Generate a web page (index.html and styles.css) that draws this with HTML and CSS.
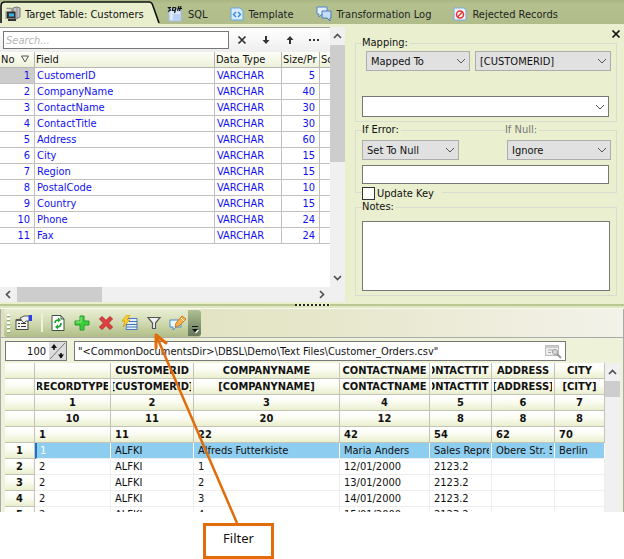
FILE: index.html
```html
<!DOCTYPE html>
<html lang="en">
<head>
<meta charset="utf-8">
<title>Target Table: Customers</title>
<link rel="stylesheet" href="styles.css">
</head>
<body>
<div class="app">
  <nav class="tabs">
    <a class="tab tab-active" href="#target">
      <svg class="tab-shape" viewBox="0 0 160 24" width="160" height="24"><path d="M0 24V6Q1 2 5 2H149Q152 2 153 6L159 24Z" fill="#e9efcd"/><path d="M1 23V6Q1 2 5 2H149Q152 2 153 6L159 23" fill="none" stroke="#111" stroke-width="1.6"/></svg>
      <span class="tab-body">
        <svg width="16" height="16" viewBox="0 0 16 16"><path d="M1.500 2.500h5v2h3" fill="none" stroke="#999" stroke-width="1.500"/><path d="M8 2l4-1 3 1v9l-4 2-3-2z" fill="#c4c4c4" stroke="#777"/><path d="M12 2v10" stroke="#888"/><rect x="2" y="6" width="8" height="6" fill="#3a3a3a" stroke="#222"/><path d="M4 7.500h5v3H4z" fill="#35b4ea"/><path d="M3 14h8" stroke="#333" stroke-width="2"/><path d="M1 5v8" stroke="#999"/></svg>
        Target Table: Customers
      </span>
    </a>
    <a class="tab" href="#sql">
      <svg width="16" height="16" viewBox="0 0 16 16"><path d="M2 3h12v12H2z" fill="#dce8fb" stroke="#9fb8e6"/><path d="M6 8h7v6H6z" fill="#bcd1f6"/><path d="M4 1.500H1.500L3.500 4L1 5.500M8.500 1.500H6L5.500 4.500H8L9 1.500L7.500 7M10.500 5L12 0M11.500 2.500H15M14 0L12.500 5" fill="none" stroke="#111" stroke-width="1.200"/></svg>
      SQL
    </a>
    <a class="tab" href="#template">
      <svg width="14" height="14" viewBox="0 0 14 14"><path d="M1 1h9l3 3v9H1z" fill="#d6ebfc" stroke="#65a8e3"/><path d="M6 5L3.500 7.500L6 10M8 5l2.500 2.500L8 10" fill="none" stroke="#328ada" stroke-width="1.400"/></svg>
      Template
    </a>
    <a class="tab" href="#log">
      <svg width="16" height="16" viewBox="0 0 16 16"><path d="M1 1h10v7H6l-3 3V8H1z" fill="#e4effc" stroke="#5585c8"/><path d="M6 5h9v7h-1v3l-3-3H6z" fill="#c3dcf8" stroke="#4778c0"/></svg>
      Transformation Log
    </a>
    <a class="tab" href="#rejected">
      <svg width="14" height="14" viewBox="0 0 14 14"><path d="M1 1h10l2 2v10H1z" fill="#e9f2fc" stroke="#7fa9db"/><circle cx="7" cy="7.500" r="3.500" fill="#fff" stroke="#e3342c" stroke-width="1.500"/><path d="M4.500 10l5-5" stroke="#e3342c" stroke-width="1.500"/></svg>
      Rejected Records
    </a>
  </nav>

  <main class="upper">
    <section class="fields">
      <div class="fields-view">
        <div class="search">
          <input class="search-box" type="text" placeholder="Search..." aria-label="Search">
          <button class="tool" aria-label="Clear"><svg width="10" height="10" viewBox="0 0 10 10"><path d="M1.500 1.500l7 7M8.500 1.500l-7 7" stroke="#333" stroke-width="1.700"/></svg></button>
          <button class="tool" aria-label="Next"><svg width="10" height="10" viewBox="0 0 10 10"><path d="M5 1v6" stroke="#333" stroke-width="2"/><path d="M1.500 5h7L5 9z" fill="#333"/></svg></button>
          <button class="tool" aria-label="Previous"><svg width="10" height="10" viewBox="0 0 10 10"><path d="M5 9V3" stroke="#333" stroke-width="2"/><path d="M1.500 5h7L5 1z" fill="#333"/></svg></button>
          <button class="tool" aria-label="More"><svg width="10" height="10" viewBox="0 0 10 10"><path d="M0 4h2v2H0zM4 4h2v2H4zM8 4h2v2H8z" fill="#333"/></svg></button>
        </div>
        <table class="field-table">
          <colgroup><col class="f-no"><col><col class="f-type"><col class="f-size"><col class="f-scale"></colgroup>
          <thead><tr><th>No <svg class="sort" width="8" height="8" viewBox="0 0 8 8"><path d="M.5 1h7L4 7z" fill="none" stroke="#555"/></svg></th><th>Field</th><th>Data Type</th><th>Size/Pr</th><th>Sc</th></tr></thead>
          <tbody>
            <tr class="current"><td>1</td><td>CustomerID</td><td>VARCHAR</td><td>5</td><td></td></tr>
            <tr><td>2</td><td>CompanyName</td><td>VARCHAR</td><td>40</td><td></td></tr>
            <tr><td>3</td><td>ContactName</td><td>VARCHAR</td><td>30</td><td></td></tr>
            <tr><td>4</td><td>ContactTitle</td><td>VARCHAR</td><td>30</td><td></td></tr>
            <tr><td>5</td><td>Address</td><td>VARCHAR</td><td>60</td><td></td></tr>
            <tr><td>6</td><td>City</td><td>VARCHAR</td><td>15</td><td></td></tr>
            <tr><td>7</td><td>Region</td><td>VARCHAR</td><td>15</td><td></td></tr>
            <tr><td>8</td><td>PostalCode</td><td>VARCHAR</td><td>10</td><td></td></tr>
            <tr><td>9</td><td>Country</td><td>VARCHAR</td><td>15</td><td></td></tr>
            <tr><td>10</td><td>Phone</td><td>VARCHAR</td><td>24</td><td></td></tr>
            <tr><td>11</td><td>Fax</td><td>VARCHAR</td><td>24</td><td></td></tr>
          </tbody>
        </table>
      </div>
      <div class="vbar">
        <svg width="15" height="18" viewBox="0 0 15 18"><path d="M4 11l3.500-3.500L11 11" fill="none" stroke="#505050" stroke-width="1.700"/></svg>
        <span class="vthumb"></span>
        <svg class="bar-end" width="15" height="18" viewBox="0 0 15 18"><path d="M4 7l3.500 3.500L11 7" fill="none" stroke="#505050" stroke-width="1.700"/></svg>
      </div>
      <div class="hbar">
        <svg width="17" height="15" viewBox="0 0 17 15"><path d="M10 4L6.500 7.500L10 11" fill="none" stroke="#505050" stroke-width="1.700"/></svg>
        <span class="hthumb"></span>
        <svg class="bar-end" width="17" height="15" viewBox="0 0 17 15"><path d="M7 4l3.500 3.500L7 11" fill="none" stroke="#505050" stroke-width="1.700"/></svg>
      </div>
    </section>

    <section class="props">
      <div class="props-close"><button class="tool" aria-label="Close"><svg width="10" height="10" viewBox="0 0 10 10"><path d="M1.500 1.500l7 7M8.500 1.500l-7 7" stroke="#111" stroke-width="1.700"/></svg></button></div>
      <div class="group">
        <div class="group-title"><label for="mapping">Mapping:</label></div>
        <div class="pair pair-map">
          <div class="pick"><select id="mapping"><option>Mapped To</option></select><svg class="chev" width="10" height="6" viewBox="0 0 10 6"><path d="M1 1l4 4l4-4" fill="none" stroke="#555"/></svg></div>
          <div class="pick"><select aria-label="Source column"><option>[CUSTOMERID]</option></select><svg class="chev" width="10" height="6" viewBox="0 0 10 6"><path d="M1 1l4 4l4-4" fill="none" stroke="#555"/></svg></div>
        </div>
        <div class="pick pick-white"><select aria-label="Expression"><option></option></select><svg class="chev" width="10" height="6" viewBox="0 0 10 6"><path d="M1 1l4 4l4-4" fill="none" stroke="#555"/></svg></div>
      </div>
      <div class="group group-error">
        <div class="group-title"><label for="iferror">If Error:</label><label class="muted" for="ifnull">If Null:</label></div>
        <div class="pair pair-error">
          <div class="pick"><select id="iferror"><option>Set To Null</option></select><svg class="chev" width="10" height="6" viewBox="0 0 10 6"><path d="M1 1l4 4l4-4" fill="none" stroke="#555"/></svg></div>
          <div class="pick"><select id="ifnull"><option>Ignore</option></select><svg class="chev" width="10" height="6" viewBox="0 0 10 6"><path d="M1 1l4 4l4-4" fill="none" stroke="#555"/></svg></div>
        </div>
        <input class="line" type="text" aria-label="Error value">
        <label class="check"><input type="checkbox">Update Key</label>
      </div>
      <div class="group group-notes">
        <div class="group-title"><label for="notes">Notes:</label></div>
        <textarea id="notes"></textarea>
      </div>
    </section>
  </main>

  <div class="splitter"><span class="grip"></span></div>

  <section class="source">
    <div class="toolbar-row">
      <div class="toolbar">
        <span class="handle"></span>
        <button class="tool tool-first" aria-label="Properties"><svg width="18" height="16" viewBox="0 0 18 16"><path d="M1 4.500h12v10H1z" fill="#f5f5ee" stroke="#444"/><path d="M1 4h12v2H1z" fill="#555"/><path d="M3 8.500h2M3 11.500h2M6 8.500h5M6 11.500h5" stroke="#333"/><path d="M5 3l4-2h5v5h-3L9 8 7 6z" fill="#eee" stroke="#555"/><path d="M14 0h3v6h-3z" fill="#2a3df0"/></svg></button>
        <span class="divider"></span>
        <button class="tool" aria-label="Refresh"><svg width="16" height="16" viewBox="0 0 16 16"><path d="M2 .5h9L14 4v11.500H2z" fill="#fff" stroke="#3f5449"/><path d="M11 1v3h3" fill="none" stroke="#3f5449"/><path d="M5 8q0-3 4-3M11 8q0 4-4 4" fill="none" stroke="#1fa32c" stroke-width="1.700"/><path d="M8 2.500l3 2.500-3 2.500zM8 9.500L5 12l3 2.500z" fill="#1fa32c"/></svg></button>
        <button class="tool" aria-label="Add"><svg width="16" height="16" viewBox="0 0 16 16"><path d="M6 1h4v5h5v4h-5v5H6v-5H1V6h5z" fill="#3ed03c" stroke="#249a2a"/><path d="M7 2v5H2" fill="none" stroke="#8df084"/></svg></button>
        <button class="tool" aria-label="Delete"><svg width="16" height="16" viewBox="0 0 16 16"><path d="M4 1.500l4 4 4-4L14.500 4l-4 4 4 4-2.500 2.500-4-4-4 4L1.500 12l4-4-4-4z" fill="#dc3f40" stroke="#b82b2e"/></svg></button>
        <button class="tool" aria-label="Execute"><svg width="18" height="16" viewBox="0 0 18 16"><path d="M6 3.500h10v11H5z" fill="#e5f0fc" stroke="#4779ae"/><path d="M8 6.500h8M6 9.500h10M6 12h10" stroke="#4779ae"/><path d="M6 0L1 6h3l-2 6 7-7H6l3-5z" fill="#ffd22e" stroke="#d89812" stroke-width=".8"/></svg></button>
        <button class="tool" aria-label="Filter" id="filter"><svg width="16" height="16" viewBox="0 0 16 16"><path d="M2 2.500h12L9.500 8v5.500h-3V8z" fill="#f2f2f2" stroke="#555" stroke-width="1.200"/></svg></button>
        <button class="tool" aria-label="Edit"><svg width="18" height="16" viewBox="0 0 18 16"><path d="M1 5h11v7H7l-3 3v-3H1z" fill="#eef6ff" stroke="#488bd0"/><path d="M13 1l4 3-7 7-4 1 1-4z" fill="#f6b04c" stroke="#cf7c1d"/><path d="M12 3l3 3" stroke="#fff"/></svg></button>
        <button class="overflow" aria-label="Toolbar options"><svg width="12" height="24" viewBox="0 0 12 24"><path d="M3 14.500h6" stroke="#111"/><path d="M4 18h6l-3 3.500z" fill="#fff"/><path d="M3 17h6l-3 3.500z" fill="#111"/></svg></button>
      </div>
    </div>
    <div class="path-row">
      <div class="spin"><input type="text" value="100" aria-label="Rows"><button aria-label="Change row count"><svg width="17" height="18" viewBox="0 0 17 18"><path d="M1 17L16 1" stroke="#777"/><path d="M5 3v5M12 11v5" stroke="#111" stroke-width="1.600"/><path d="M2 6l3-4 3 4zM9 12.500l3 4 3-4z" fill="#111"/></svg></button></div>
      <div class="path"><input type="text" value="&quot;&lt;CommonDocumentsDir&gt;\DBSL\Demo\Text Files\Customer_Orders.csv&quot;" aria-label="Source file"><svg width="18" height="15" viewBox="0 0 18 15"><path d="M1.500 1.500h13v10h-13z" fill="#eee" stroke="#bbb"/><path d="M2 3h12M4 6h5M4 8.500h3" stroke="#aaa"/><circle cx="11" cy="8" r="2.500" fill="#ddd" stroke="#999"/><path d="M13 10l4 4" stroke="#999" stroke-width="2"/></svg></div>
    </div>
    <div class="grid-row">
      <div class="grid-view">
        <table class="data">
          <colgroup><col class="d-head"><col class="d-rec"><col class="d-cust"><col><col class="d-contact"><col class="d-title"><col class="d-addr"><col class="d-city"></colgroup>
          <thead>
            <tr><th></th><th></th><th><span>CUSTOMERID</span></th><th><span>COMPANYNAME</span></th><th><span>CONTACTNAME</span></th><th><span>CONTACTTITLE</span></th><th><span>ADDRESS</span></th><th><span>CITY</span></th></tr>
            <tr><th></th><th><span>RECORDTYPE</span></th><th><span>[CUSTOMERID]</span></th><th><span>[COMPANYNAME]</span></th><th><span>[CONTACTNAME]</span></th><th><span>[CONTACTTITLE]</span></th><th><span>[ADDRESS]</span></th><th><span>[CITY]</span></th></tr>
            <tr><th></th><th>1</th><th>2</th><th>3</th><th>4</th><th>5</th><th>6</th><th>7</th></tr>
            <tr><th></th><th>10</th><th>11</th><th>20</th><th>12</th><th>8</th><th>8</th><th>8</th></tr>
            <tr class="start"><th></th><th>1</th><th>11</th><th>22</th><th>42</th><th>54</th><th>62</th><th>70</th></tr>
          </thead>
          <tbody>
            <tr class="selected"><th>1</th><td>1</td><td>ALFKI</td><td>Alfreds Futterkiste</td><td>Maria Anders</td><td><div>Sales Representative</div></td><td><div>Obere Str. 57</div></td><td>Berlin</td></tr>
            <tr><th>2</th><td>2</td><td>ALFKI</td><td>1</td><td>12/01/2000</td><td>2123.2</td><td></td><td></td></tr>
            <tr><th>3</th><td>2</td><td>ALFKI</td><td>2</td><td>13/01/2000</td><td>2123.2</td><td></td><td></td></tr>
            <tr><th>4</th><td>2</td><td>ALFKI</td><td>3</td><td>14/01/2000</td><td>2123.2</td><td></td><td></td></tr>
            <tr><th>5</th><td>2</td><td>ALFKI</td><td>4</td><td>15/01/2000</td><td>2123.2</td><td></td><td></td></tr>
          </tbody>
        </table>
      </div>
      <div class="vbar vbar-data">
        <svg width="15" height="18" viewBox="0 0 15 18"><path d="M4 11l3.500-3.500L11 11" fill="none" stroke="#505050" stroke-width="1.700"/></svg>
        <span class="vthumb"></span>
      </div>
    </div>
  </section>

  <svg class="pointer" width="90" height="194" viewBox="0 0 90 194"><path d="M5 3L86 191" stroke="#e36c0a" stroke-width="2.500"/><path d="M5 3L5 16M5 3L15 11" stroke="#e36c0a" stroke-width="3" stroke-linecap="round" fill="none"/></svg>
  <div class="callout">Filter</div>
</div>
</body>
</html>
```
FILE: styles.css
```css
* { box-sizing: border-box; }

body {
  margin: 0;
  background: #fff;
  color: #111;
  font: 11px/15px "DejaVu Sans Condensed", "Noto Sans", sans-serif;
}

button, input, select, textarea { font: inherit; color: inherit; margin: 0; border-radius: 0; }
button { border: 0; padding: 0; background: none; }
svg { display: block; flex: none; }

/* Bottom padding leaves room for the callout under the window */
.app { position: relative; padding-bottom: 47px; }

/* Tabs */
.tabs {
  display: flex;
  align-items: center;
  gap: 22px;
  height: 24px;
  background: linear-gradient(#a8b584, #b4c18e 4px, #b0bd8b);
}
.tab {
  display: flex;
  align-items: center;
  gap: 5px;
  padding-top: 4px;
  color: #222;
  text-decoration: none;
  white-space: nowrap;
}
.tab-active {
  display: grid;
  width: 160px;
  margin-right: -15px;
  padding: 0;
  color: #111;
}
.tab-active > * { grid-area: 1 / 1; }
.tab-body { display: flex; align-items: center; gap: 4px; padding: 4px 0 0 5px; }

/* Upper half */
.upper {
  display: grid;
  grid-template-columns: 347px 1fr;
  background: #e9efcf;
}
.fields {
  display: grid;
  grid-template-columns: 1fr 15px;
  grid-template-rows: 1fr 15px;
  margin-right: 2px;
  border-top: 3px solid #e9efcf;
  background: #f0f0f0;
}
.fields-view { overflow: hidden; background: #fff; }
.search {
  display: flex;
  align-items: center;
  gap: 14px;
  height: 25px;
  padding: 0 11px 0 3px;
  border-top: 1px solid #a0a0a0;
  background: linear-gradient(#fff, #eee);
}
.search-box {
  flex: 1;
  min-width: 0;
  height: 18px;
  margin-right: -6px;
  padding: 0 2px;
  border: 1px solid #777;
  background: #fff;
}
.search-box::placeholder { color: #b4b4b4; font-style: italic; opacity: 1; }

table { width: 100%; table-layout: fixed; border-collapse: separate; border-spacing: 0; }
th, td { height: 16px; padding: 0; line-height: 15px; white-space: nowrap; overflow: hidden; }

.f-no { width: 35px; }
.f-type { width: 67px; }
.f-size { width: 38px; }
.f-scale { width: 10px; }
.field-table th {
  padding-left: 1px;
  border-right: 1px solid #b5b5b5;
  border-bottom: 1px solid #b5b5b5;
  background: linear-gradient(#fdfef8, #edf1d8);
  font-weight: normal;
  text-align: left;
}
.field-table td {
  padding: 0 4px 0 2px;
  border-right: 1px solid #c0c0c0;
  border-bottom: 1px solid #c0c0c0;
  color: #1010f0;
}
.field-table td:first-child, .field-table td:nth-child(4) { text-align: right; }
.field-table th:last-child, .field-table td:last-child { border-right: 0; }
.current td:first-child { background: #ccc; }
.sort { display: inline-block; margin-left: 3px; }

.vbar { display: flex; flex-direction: column; background: #f0f0f0; }
.vthumb { height: 117px; background: #cdcdcd; }
.hbar { display: flex; grid-column: 1 / -1; }
.hthumb { width: 85px; background: #cdcdcd; }
.vbar .bar-end { margin-top: auto; }
.hbar .bar-end { margin-left: auto; margin-right: 15px; }

/* Mapping properties */
.props { padding: 0 7px 6px 8px; }
.props-close { display: flex; justify-content: flex-end; align-items: center; height: 19px; margin-right: -4px; }
.group { padding: 0 5px 4px 6px; border: 1px solid #d9dcd0; }
.group-title { display: flex; margin-top: -8px; line-height: 14px; }
.group-title label { padding-right: 2px; background: #e9efcf; }
.group-title .muted { margin-left: auto; margin-right: 72px; color: #777; }
.group-error { margin-top: 8px; padding-bottom: 0; }
.group-notes { margin-top: 14px; }

.pair { display: grid; }
.pair-map { grid-template-columns: 104px 1fr; gap: 5px; margin: 1px 0 25px 4px; }
.pair-error { grid-template-columns: 97px 104px; justify-content: space-between; margin: 3px 0 5px; }
.pick { display: grid; align-items: center; }
.pick > * { grid-area: 1 / 1; }
.pick select {
  appearance: none;
  width: 100%;
  height: 20px;
  padding: 0 18px 0 4px;
  border: 1px solid #adadad;
  background: #e1e1e1;
}
.pick-white { margin-right: 2px; }
.pick-white select { height: 21px; border-color: #777; background: #fff; }
.chev { justify-self: end; margin-right: 4px; pointer-events: none; }
.line { display: block; width: calc(100% - 2px); height: 19px; padding: 0 3px; border: 1px solid #777; background: #fff; }
.check {
  display: flex;
  gap: 2px;
  width: 80px;
  height: 13px;
  margin: 3px 0 -8px;
  background: #e9efcf;
  line-height: 14px;
  white-space: nowrap;
}
.check input { appearance: none; width: 13px; height: 13px; border: 1px solid #333; background: #fff; }
textarea {
  display: block;
  width: calc(100% - 1px);
  height: 70px;
  margin-top: 7px;
  padding: 2px;
  border: 1px solid #777;
  background: #fff;
  resize: none;
}

.splitter {
  display: flex;
  justify-content: center;
  height: 7px;
  padding-top: 2px;
  border-bottom: 1px solid #f7f8ee;
  background: linear-gradient(#e9efcf 2px, #b9c792 2px 4px, #dfe6c2 4px);
}
.grip { width: 35px; height: 2px; background: repeating-linear-gradient(90deg, #222 0 2px, #e9efcf 2px 4px); }

/* Source preview */
.source { padding: 0 3px 0 4px; border-left: 1px solid #aaa; border-right: 1px solid #aaa; background: #eef2d8; }
.toolbar-row {
  margin: 0 -3px 0 -4px;
  padding: 0 3px;
  border-bottom: 1px solid #aaa;
  background: linear-gradient(90deg, #dfe0bb, #e6e6ca 50%, #f3f2e9);
}
.toolbar {
  display: flex;
  align-items: center;
  width: fit-content;
  height: 28px;
  border-radius: 3px;
  background: linear-gradient(#e9eed4, #d0dab0 50%, #b0bd87);
}
.handle { width: 3px; height: 19px; margin-left: 3px; background: repeating-linear-gradient(#fff 0 2px, #98a577 2px 3px, transparent 3px 4px); }
.toolbar .tool { display: grid; place-items: center; width: 24px; }
.toolbar .tool-first { margin-left: 2px; }
.divider { width: 2px; height: 18px; margin: 0 3px 0 5px; background: #eef2dd; }
.overflow { display: grid; place-items: end center; width: 13px; height: 26px; margin-left: -2px; border-radius: 0 3px 3px 0; background: linear-gradient(#adc08f, #65785b); }

.path-row { display: flex; gap: 7px; padding: 3px 54px 2px 0; }
.spin, .path { display: flex; align-items: center; height: 20px; border: 1px solid #777; background: #fff; }
.spin { width: 62px; }
.spin input, .path input { flex: 1; width: 0; height: 16px; padding: 0 3px; border: 0; outline: 0; background: none; }
.spin input { text-align: right; }
.spin button { background: #ddd; }
.path { flex: 1; padding-right: 3px; }

.grid-row { display: grid; grid-template-columns: 1fr 15px; }
.grid-view { height: 149px; overflow: hidden; background: #fff; }
.vbar-data .vthumb { height: 16px; }
.d-head { width: 30px; }
.d-rec { width: 76px; }
.d-cust { width: 83px; }
.d-contact { width: 90px; }
.d-title { width: 62px; }
.d-addr { width: 63px; }
.d-city { width: 50px; }
.data th {
  border-right: 1px solid #c3c3bb;
  border-bottom: 1px solid #c3c3bb;
  background: linear-gradient(#fff, #fafbf0 50%, #eaefcd);
  font-weight: bold;
}
.data thead span { display: flex; justify-content: center; margin: 0 2px; overflow: hidden; }
.data .start th { padding-left: 4px; text-align: left; }
.data td { padding: 0 2px 0 4px; border-right: 1px solid #eee; border-bottom: 1px solid #eee; }
.data td div { overflow: hidden; }
.data .selected td { border-right-color: #fff; background: #8dcdf0; }
.data .selected td:nth-child(2) { border-left: 2px solid #1575c8; padding-left: 3px; color: #fff; }

/* Annotation lying over the window */
.pointer { position: absolute; left: 151px; top: 332px; pointer-events: none; }
.callout {
  position: absolute;
  left: 203px;
  bottom: 0;
  width: 71px;
  height: 36px;
  border: 3px solid #e36c0a;
  background: #fff;
  font: 13px/25px "Noto Sans", sans-serif;
  text-align: center;
}
```
